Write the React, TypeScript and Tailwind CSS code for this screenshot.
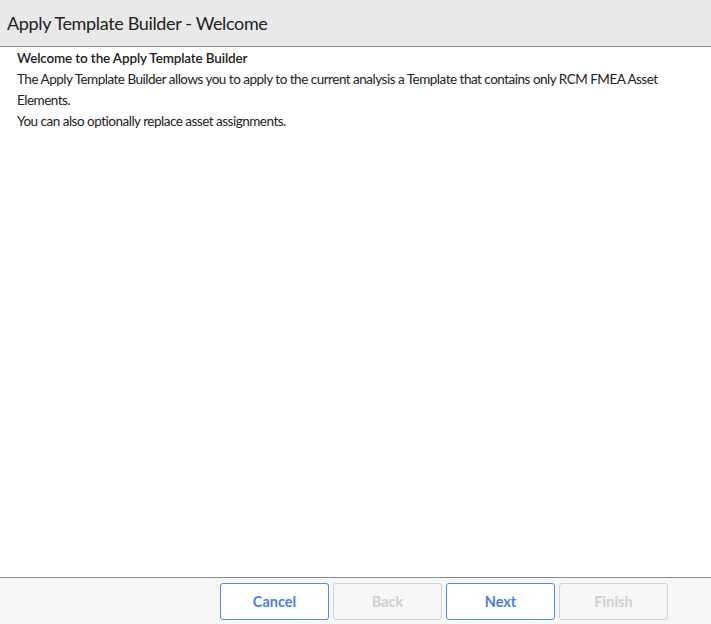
import React from "react";

const buttons = [
  { label: "Cancel", enabled: true },
  { label: "Back", enabled: false },
  { label: "Next", enabled: true },
  { label: "Finish", enabled: false },
];

export default function App() {
  return (
    <div
      className="flex h-[624px] w-[711px] flex-col bg-white text-[#333]"
      style={{ fontFamily: "Lato, 'Noto Sans', sans-serif" }}
    >
      {/* Header */}
      <div className="flex h-[47px] shrink-0 items-center border-b border-[#8a8a8a] bg-[#e9e9e9] px-[7px]">
        <h1 className="text-[18px] font-normal tracking-[-0.35px] text-[#222]">
          Apply Template Builder - Welcome
        </h1>
      </div>

      {/* Body */}
      <div className="flex-1 px-[17px] pt-[1px] text-[13.5px] leading-[21px] tracking-[-0.5px] text-[#222]">
        <p className="font-semibold tracking-[-0.15px]">Welcome to the Apply Template Builder</p>
        <p>
          The Apply Template Builder allows you to apply to the current analysis a
          Template that contains only RCM FMEA Asset Elements.
        </p>
        <p>You can also optionally replace asset assignments.</p>
      </div>

      {/* Footer */}
      <div className="flex h-[47px] shrink-0 items-center justify-end gap-[4px] border-t border-[#8a8a8a] bg-[#f7f7f7] pr-[43px]">
        {buttons.map((b) => (
          <button
            key={b.label}
            disabled={!b.enabled}
            className={
              b.enabled
                ? "h-[37px] w-[109px] rounded-[3px] border border-[#4a8fe7] bg-white pt-[1px] text-[14.5px] font-bold text-[#4a80e0]"
                : "h-[37px] w-[109px] rounded-[3px] border border-[#d2d2d2] bg-transparent pt-[1px] text-[14.5px] font-bold text-[#cfcfcf]"
            }
          >
            {b.label}
          </button>
        ))}
      </div>
    </div>
  );
}
